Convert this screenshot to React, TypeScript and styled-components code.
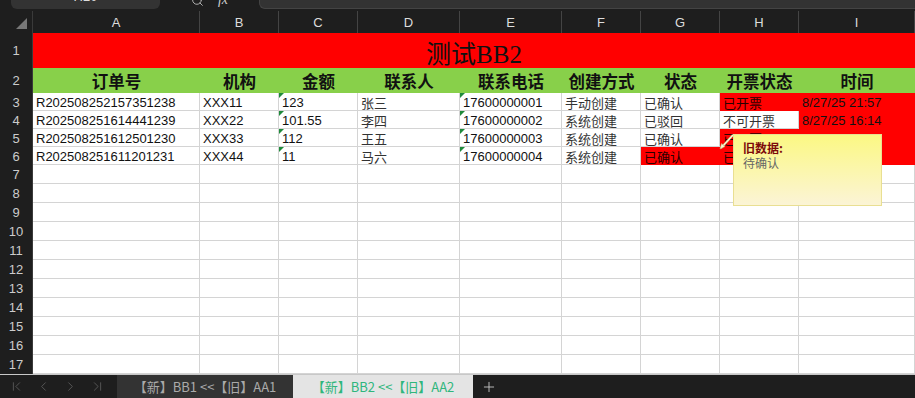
import styled, { createGlobalStyle } from "styled-components";
import { Search, ChevronFirst, ChevronLeft, ChevronRight, ChevronLast, Plus } from "lucide-react";

const GlobalStyle = createGlobalStyle`
  html, body {
    margin: 0;
    padding: 0;
    background: #1e1e1e;
  }
  * {
    box-sizing: border-box;
  }
`;

const Page = styled.div`
  width: 915px;
  height: 398px;
  overflow: hidden;
  display: flex;
  flex-direction: column;
  background: #1e1e1e;
  font-family: "Liberation Sans", "Noto Sans CJK SC", sans-serif;
`;

const TopBar = styled.div`
  height: 11px;
  flex-shrink: 0;
  display: flex;
  align-items: flex-end;
  padding-bottom: 2px;
  overflow: hidden;
`;

const NameBox = styled.div`
  margin-left: 11px;
  width: 149px;
  height: 24px;
  flex-shrink: 0;
  background: #333;
  border-radius: 0 0 6px 6px;
  color: #ddd;
  font-size: 13px;
  line-height: 24px;
  text-align: center;
`;

const FormulaTools = styled.div`
  width: 99px;
  height: 22px;
  flex-shrink: 0;
  display: flex;
  align-items: center;
  justify-content: center;
  gap: 14px;
  color: #ccc;
  padding-top: 4px;
`;

const Fx = styled.span`
  font-family: "Liberation Serif", serif;
  font-style: italic;
  font-size: 14px;
`;

const FormulaBox = styled.div`
  flex: 1;
  height: 24px;
  background: #333;
  border: 1px solid #444;
  border-top: none;
  border-right: none;
  border-radius: 0 0 0 6px;
`;

const Sheet = styled.div`
  position: relative;
  display: grid;
  grid-template-columns: 33px 167px 79px 79px 102px 102px 79px 79px 79px 1fr;
  grid-template-rows: 22px 35px 25px repeat(4, 18px) repeat(11, 19px);
  background: #fff;
  flex-shrink: 0;
`;

const Corner = styled.div`
  position: relative;
  background: #1e1e1e;
  border-right: 1px solid #3a3a3a;
  &::after {
    content: "";
    position: absolute;
    right: 5px;
    bottom: 4px;
    width: 11px;
    height: 11px;
    background: #777;
    clip-path: polygon(100% 0, 100% 100%, 0 100%);
  }
`;

const ColHeader = styled.div`
  background: #1e1e1e;
  border-right: 1px solid #444;
  color: #ddd;
  font-size: 13px;
  display: flex;
  align-items: center;
  justify-content: center;
`;

const RowHeader = styled.div`
  background: #1e1e1e;
  border-right: 1px solid #3a3a3a;
  color: #ccc;
  font-size: 13px;
  display: flex;
  align-items: center;
  justify-content: center;
`;

const TitleCell = styled.div`
  grid-column: 2 / -1;
  background: #ff0000;
  display: flex;
  align-items: center;
  justify-content: center;
  color: #111;
  font-family: "Liberation Serif", "Noto Sans CJK SC", serif;
  font-size: 25px;
  padding-top: 2px;
`;

const HeadCell = styled.div`
  background: #88d04a;
  display: flex;
  align-items: center;
  justify-content: center;
  color: #111;
  font-family: "Noto Sans CJK SC", sans-serif;
  font-weight: 700;
  font-size: 16.5px;
`;

const Cell = styled.div<{ $fill?: string; $flag?: boolean; $cjk?: boolean }>`
  position: relative;
  background: ${(p) => p.$fill ?? "#fff"};
  border-right: 1px solid ${(p) => p.$fill ?? "#d4d4d4"};
  border-bottom: 1px solid ${(p) => p.$fill ?? "#d4d4d4"};
  display: flex;
  align-items: center;
  padding: 1px 0 0 3px;
  white-space: nowrap;
  overflow: hidden;
  font-family: ${(p) =>
    p.$cjk ? `"Noto Sans CJK SC", sans-serif` : `"Liberation Sans", "Noto Sans CJK SC", sans-serif`};
  font-size: 13px;
  color: ${(p) => (p.$cjk ? (p.$fill ? "#2a0000" : "#333") : "#111")};
  &::before {
    content: "";
    display: ${(p) => (p.$flag ? "block" : "none")};
    position: absolute;
    left: 0;
    top: 0;
    width: 5px;
    height: 5px;
    background: #1f8a3b;
    clip-path: polygon(0 0, 100% 0, 0 100%);
  }
`;

const Comment = styled.div`
  position: absolute;
  left: 733px;
  top: 123px;
  width: 149px;
  height: 72px;
  background: linear-gradient(#fbf883, #fbf4d6);
  border: 1px solid #e9df92;
  padding: 5px 9px;
  font-family: "Noto Sans CJK SC", sans-serif;
  font-size: 12px;
  line-height: 15px;
`;

const CommentTitle = styled.div`
  color: #7d0a0a;
  font-weight: 700;
`;

const CommentBody = styled.div`
  color: #666;
`;

const Pointer = styled.svg`
  position: absolute;
  left: 717px;
  top: 121px;
`;

const TabBar = styled.div`
  flex: 1;
  display: flex;
  align-items: stretch;
  background: #1e1e1e;
  border-top: 1px solid #c8c8c8;
`;

const Nav = styled.div`
  width: 117px;
  display: flex;
  align-items: center;
  gap: 12px;
  padding-left: 9px;
  color: #606060;
`;

const Tab = styled.div<{ $active?: boolean }>`
  width: ${(p) => (p.$active ? "180px" : "176px")};
  display: flex;
  align-items: center;
  justify-content: center;
  background: ${(p) => (p.$active ? "#e4e4e4" : "#333")};
  color: ${(p) => (p.$active ? "#2fb67c" : "#aaa")};
  font-family: "Noto Sans CJK SC", sans-serif;
  font-size: 13px;
  white-space: nowrap;
`;

const AddTab = styled.div`
  display: flex;
  align-items: center;
  padding-left: 8px;
  color: #ccc;
`;

const columns = ["A", "B", "C", "D", "E", "F", "G", "H", "I"];
const heads = ["订单号", "机构", "金额", "联系人", "联系电话", "创建方式", "状态", "开票状态", "时间"];

const RED = "#ff0000";

type Row = { values: string[]; fills: Record<number, string> };

const rows: Row[] = [
  {
    values: ["R202508252157351238", "XXX11", "123", "张三", "17600000001", "手动创建", "已确认", "已开票", "8/27/25 21:57"],
    fills: { 7: RED, 8: RED },
  },
  {
    values: ["R202508251614441239", "XXX22", "101.55", "李四", "17600000002", "系统创建", "已驳回", "不可开票", "8/27/25 16:14"],
    fills: { 8: RED },
  },
  {
    values: ["R202508251612501230", "XXX33", "112", "王五", "17600000003", "系统创建", "已确认", "已开票", ""],
    fills: { 7: RED, 8: RED },
  },
  {
    values: ["R202508251611201231", "XXX44", "11", "马六", "17600000004", "系统创建", "已确认", "已开票", ""],
    fills: { 6: RED, 7: RED, 8: RED },
  },
];

const cjkCols = new Set([3, 5, 6, 7]);
const flagCols = new Set([2, 4]);

function App() {
  const emptyRows = Array.from({ length: 11 }, (_, i) => i + 7);
  return (
    <Page>
      <GlobalStyle />
      <TopBar>
        <NameBox>H20</NameBox>
        <FormulaTools>
          <Search size={13} strokeWidth={1.5} />
          <Fx>fx</Fx>
        </FormulaTools>
        <FormulaBox />
      </TopBar>
      <Sheet>
        <Corner />
        {columns.map((c) => (
          <ColHeader key={c}>{c}</ColHeader>
        ))}

        <RowHeader>1</RowHeader>
        <TitleCell>测试BB2</TitleCell>

        <RowHeader>2</RowHeader>
        {heads.map((h) => (
          <HeadCell key={h}>{h}</HeadCell>
        ))}

        {rows.map((r, ri) => (
          <>
            <RowHeader key={`h${ri}`}>{ri + 3}</RowHeader>
            {r.values.map((v, ci) => (
              <Cell key={`${ri}-${ci}`} $fill={r.fills[ci]} $flag={flagCols.has(ci)} $cjk={cjkCols.has(ci)}>
                {v}
              </Cell>
            ))}
          </>
        ))}

        {emptyRows.map((n) => (
          <>
            <RowHeader key={`e${n}`}>{n}</RowHeader>
            {columns.map((c) => (
              <Cell key={`${n}${c}`} />
            ))}
          </>
        ))}

        <Pointer width="20" height="20" viewBox="0 0 20 20">
          <line x1="16" y1="3" x2="4" y2="16" stroke="#b8ae6a" strokeWidth="2.2" />
          <line x1="16" y1="3" x2="4" y2="16" stroke="#fdf8d4" strokeWidth="1.2" />
          <polygon points="3,17 4.5,11.5 8,14.5" fill="#fdf8d4" stroke="#b8ae6a" strokeWidth="0.6" />
        </Pointer>
        <Comment>
          <CommentTitle>旧数据:</CommentTitle>
          <CommentBody>待确认</CommentBody>
        </Comment>
      </Sheet>
      <TabBar>
        <Nav>
          <ChevronFirst size={15} strokeWidth={1.3} />
          <ChevronLeft size={15} strokeWidth={1.3} />
          <ChevronRight size={15} strokeWidth={1.3} />
          <ChevronLast size={15} strokeWidth={1.3} />
        </Nav>
        <Tab>【新】BB1 &lt;&lt;【旧】AA1</Tab>
        <Tab $active>【新】BB2 &lt;&lt;【旧】AA2</Tab>
        <AddTab>
          <Plus size={16} strokeWidth={1.3} />
        </AddTab>
      </TabBar>
    </Page>
  );
}

export default App;
